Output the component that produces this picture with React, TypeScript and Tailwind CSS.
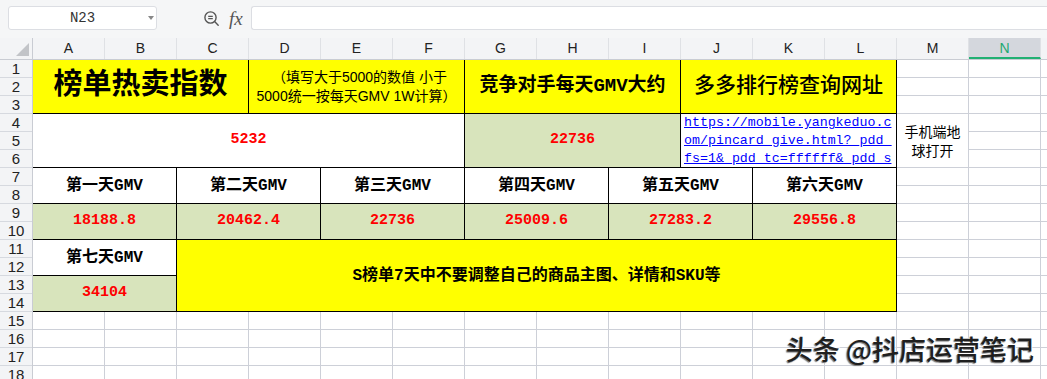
import { ChevronDown } from "lucide-react";

const columns = ["A", "B", "C", "D", "E", "F", "G", "H", "I", "J", "K", "L", "M", "N"];
const rows = Array.from({ length: 18 }, (_, i) => i + 1);

const days = [
  { label: "第一天GMV", value: "18188.8", head: "col-start-1 col-span-2 row-start-7 row-span-2", cell: "col-start-1 col-span-2 row-start-9 row-span-2" },
  { label: "第二天GMV", value: "20462.4", head: "col-start-3 col-span-2 row-start-7 row-span-2", cell: "col-start-3 col-span-2 row-start-9 row-span-2" },
  { label: "第三天GMV", value: "22736", head: "col-start-5 col-span-2 row-start-7 row-span-2", cell: "col-start-5 col-span-2 row-start-9 row-span-2" },
  { label: "第四天GMV", value: "25009.6", head: "col-start-7 col-span-2 row-start-7 row-span-2", cell: "col-start-7 col-span-2 row-start-9 row-span-2" },
  { label: "第五天GMV", value: "27283.2", head: "col-start-9 col-span-2 row-start-7 row-span-2", cell: "col-start-9 col-span-2 row-start-9 row-span-2" },
  { label: "第六天GMV", value: "29556.8", head: "col-start-11 col-span-2 row-start-7 row-span-2", cell: "col-start-11 col-span-2 row-start-9 row-span-2" },
];

const cellFont = "font-['Liberation_Mono','Noto_Sans_CJK_SC',monospace]";

function Toolbar() {
  return (
    <div className="flex h-[38px] items-start bg-[#f5f6f7] pl-2 pt-[6px]">
      <div className="relative flex h-[24px] w-[149px] items-center justify-center rounded-[3px] border border-[#dcdee3] bg-white">
        <span className="font-['Liberation_Mono',monospace] text-[14px] text-[#333]">N23</span>
        <span className="absolute right-[2px] top-[9px] h-0 w-0 border-x-[3px] border-t-[4px] border-x-transparent border-t-[#888]" />
      </div>
      <div className="ml-[46px] flex h-[24px] items-center gap-[9px]">
        <svg width="17" height="17" viewBox="0 0 17 17" fill="none" stroke="#555" strokeWidth="1.4">
          <circle cx="7.5" cy="7.5" r="5.6" />
          <path d="M5.2 6.4h4.6M5.2 8.6h4.6" strokeWidth="1.1" />
          <path d="M11.6 11.6l3.6 3.6" strokeLinecap="round" />
        </svg>
        <span className="font-['Liberation_Serif',serif] text-[19px] italic leading-none text-[#555]">fx</span>
      </div>
      <div className="ml-[8px] h-[24px] flex-1 rounded-l-[3px] border border-r-0 border-[#dcdee3] bg-white" />
    </div>
  );
}

function ColumnHeader() {
  return (
    <div className="flex h-[22px] border-b border-[#c9ccd3] bg-[#f3f4f6] font-['Liberation_Sans',sans-serif] text-[14px] text-[#222]">
      <div className="relative w-[33px] shrink-0 border-r border-[#c9ccd3]">
        <span className="absolute bottom-[3px] right-[3px] h-0 w-0 border-b-[13px] border-l-[13px] border-b-[#c2c4c8] border-l-transparent" />
      </div>
      {columns.map((c) =>
        c === "N" ? (
          <div key={c} className="flex w-[72px] shrink-0 items-center justify-center border-b-2 border-r border-b-[#21b073] border-r-[#dfe1e5] bg-[#d4d7dd] pt-[2px] text-[#1fa971]">
            {c}
          </div>
        ) : (
          <div key={c} className="flex w-[72px] shrink-0 items-center justify-center border-r border-[#dfe1e5]">
            {c}
          </div>
        )
      )}
      <div className="flex-1" />
    </div>
  );
}

function RowHeader() {
  return (
    <div className="flex w-[33px] shrink-0 flex-col border-r border-[#c9ccd3] bg-[#f3f4f6] font-['Liberation_Sans',sans-serif] text-[15px] text-[#222]">
      {rows.map((r) => (
        <div key={r} className="flex h-[18px] shrink-0 items-center justify-center border-b border-[#d6d9df] leading-none">
          {r}
        </div>
      ))}
    </div>
  );
}

function Sheet() {
  const box = "flex items-center justify-center border-r border-b border-black";
  return (
    <div className={`grid flex-1 grid-cols-[repeat(14,72px)_1fr] grid-rows-[repeat(18,18px)] bg-white bg-[linear-gradient(to_left,#cdd0d8_1px,transparent_1px),linear-gradient(to_top,#cdd0d8_1px,transparent_1px)] bg-[size:72px_18px] text-black ${cellFont}`}>
      <div className={`col-start-1 col-span-3 row-start-1 row-span-3 bg-[#ffff00] ${box}`}>
        <span className="text-[29px] font-bold">榜单热卖指数</span>
      </div>
      <div className={`col-start-4 col-span-3 row-start-1 row-span-3 bg-[#ffff00] ${box}`}>
        <div className="text-center font-['Liberation_Sans','Noto_Sans_CJK_SC',sans-serif] text-[14px] leading-[19px]">
          <div className="pl-[6px]">（填写大于5000的数值 小于</div>
          <div>5000统一按每天GMV 1W计算）</div>
        </div>
      </div>
      <div className={`col-start-7 col-span-3 row-start-1 row-span-3 bg-[#ffff00] ${box}`}>
        <span className="text-[19px] font-bold">竞争对手每天GMV大约</span>
      </div>
      <div className={`col-start-10 col-span-3 row-start-1 row-span-3 bg-[#ffff00] ${box}`}>
        <span className="text-[21px] font-medium">多多排行榜查询网址</span>
      </div>

      <div className={`col-start-1 col-span-6 row-start-4 row-span-3 bg-white ${box}`}>
        <span className="text-[15px] font-bold text-[#ff0000]">5232</span>
      </div>
      <div className={`col-start-7 col-span-3 row-start-4 row-span-3 bg-[#d8e4bc] ${box}`}>
        <span className="text-[15px] font-bold text-[#ff0000]">22736</span>
      </div>
      <div className="col-start-10 col-span-3 row-start-4 row-span-3 overflow-hidden border-r border-b border-black bg-white pl-[3px] font-['Liberation_Mono',monospace] text-[13.3px] leading-[18px] text-[#0000ff] underline">
        <div>https://mobile.yangkeduo.c</div>
        <div>om/pincard_give.html?_pdd_</div>
        <div>fs=1&amp;_pdd_tc=ffffff&amp;_pdd_s</div>
      </div>
      <div className="col-start-13 row-start-4 row-span-3 flex flex-col items-center justify-center border-r border-b border-[#cdd0d8] bg-white font-['Noto_Sans_CJK_SC',sans-serif] text-[14px] leading-[19px]">
        <div>手机端地</div>
        <div>球打开</div>
      </div>

      {days.map((d) => (
        <div key={d.label} className={`${d.head} bg-white ${box}`}>
          <span className="text-[16px] font-bold">{d.label}</span>
        </div>
      ))}
      {days.map((d) => (
        <div key={d.value} className={`${d.cell} bg-[#d8e4bc] ${box}`}>
          <span className="text-[15px] font-bold text-[#ff0000]">{d.value}</span>
        </div>
      ))}

      <div className={`col-start-1 col-span-2 row-start-11 row-span-2 bg-white ${box}`}>
        <span className="text-[16px] font-bold">第七天GMV</span>
      </div>
      <div className={`col-start-1 col-span-2 row-start-13 row-span-2 bg-[#d8e4bc] ${box}`}>
        <span className="text-[15px] font-bold text-[#ff0000]">34104</span>
      </div>
      <div className={`col-start-3 col-span-10 row-start-11 row-span-4 bg-[#ffff00] ${box}`}>
        <span className="text-[16px] font-bold">S榜单7天中不要调整自己的商品主图、详情和SKU等</span>
      </div>
    </div>
  );
}

export default function App() {
  return (
    <div className="relative h-[379px] w-[1047px] overflow-hidden bg-white">
      <Toolbar />
      <ColumnHeader />
      <div className="flex">
        <RowHeader />
        <Sheet />
      </div>
      <div className="absolute right-[13px] top-[335px] font-['Noto_Sans_CJK_SC',sans-serif] text-[27px] font-medium leading-none text-[#1f1f1f] [text-shadow:1px_-1px_0_#fff,-1px_1px_1px_#777]">
        头条 @抖店运营笔记
      </div>
    </div>
  );
}
